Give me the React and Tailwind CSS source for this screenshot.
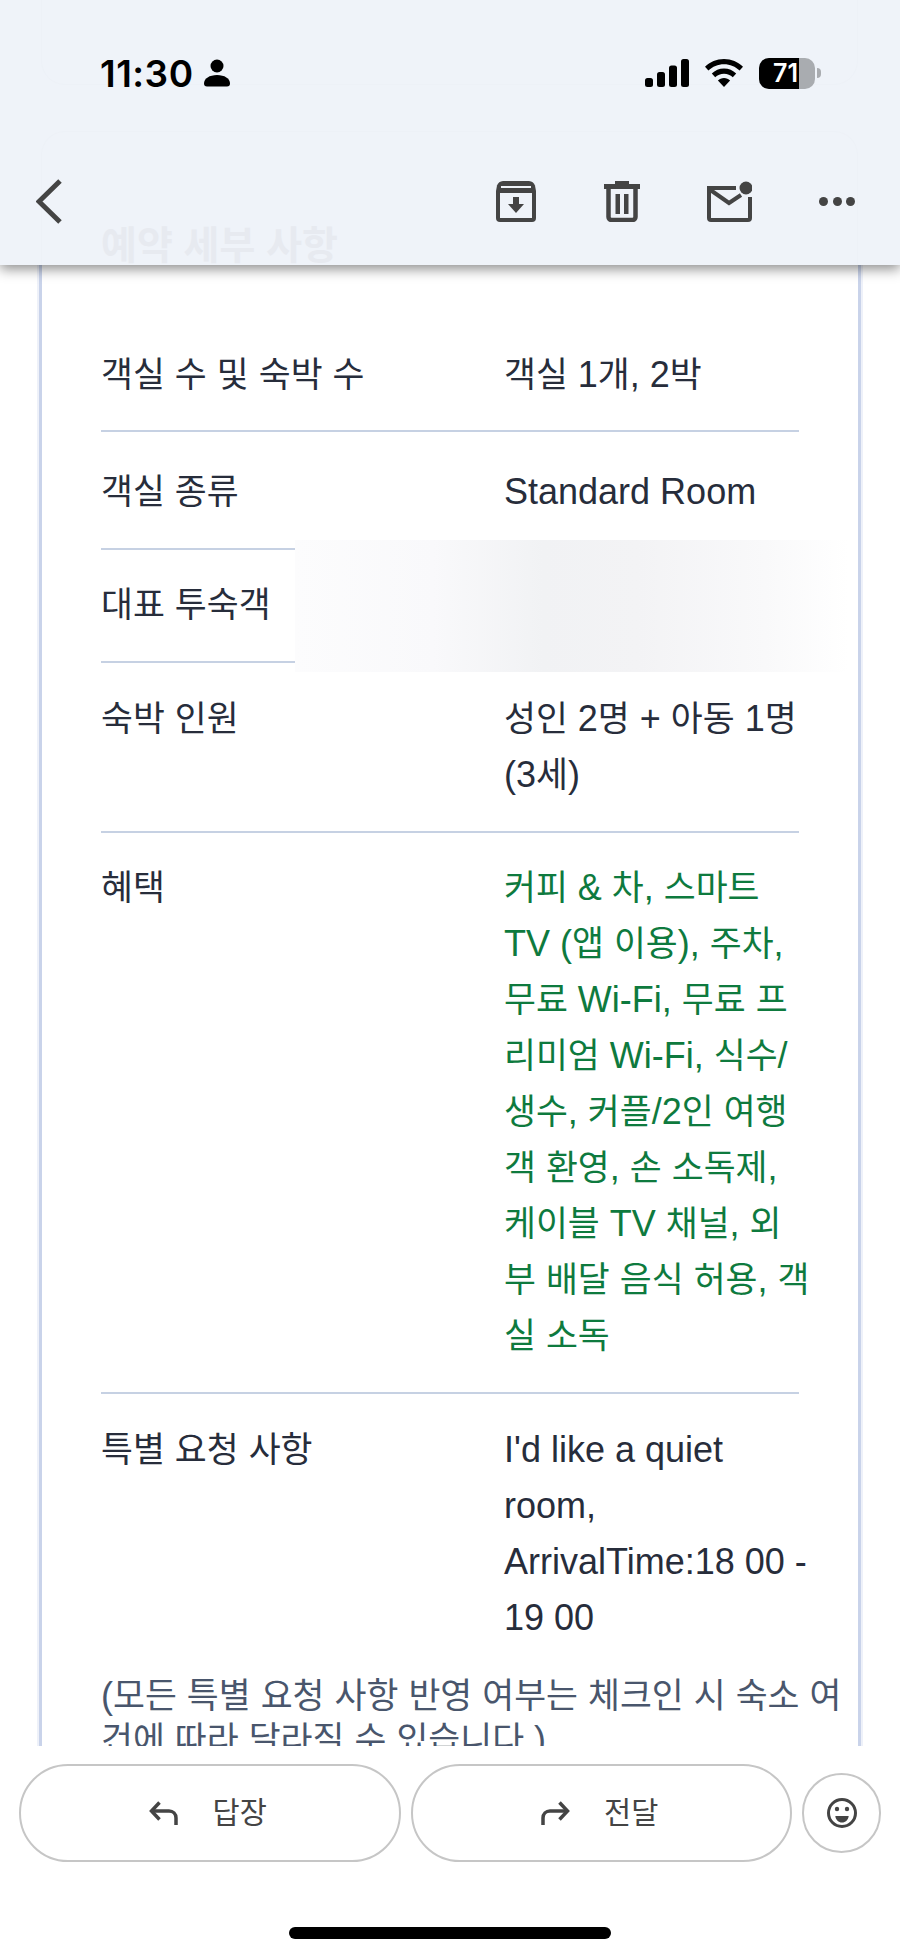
import React from "react";

// hangul is set a bit smaller than latin, like the iOS font pairing
const Txt = ({ children }) => {
  const parts = children.split(/([\uAC00-\uD7A3]+)/);
  return (
    <>
      {parts.map((part, i) =>
        /[\uAC00-\uD7A3]/.test(part) ? (
          <span key={i} className="text-[34.7px] leading-none">
            {part}
          </span>
        ) : (
          <span key={i}>{part}</span>
        )
      )}
    </>
  );
};

const Row = ({ label, lines, green, last, className, children }) => (
  <div
    className={`relative grid grid-cols-[403px_1fr] w-[698px] ${
      last ? "" : "border-b-2 border-[#c6d1e3]"
    } ${className}`}
  >
    <div className="text-[#272d3b] whitespace-nowrap">
      <Txt>{label}</Txt>
    </div>
    <div className={`whitespace-nowrap ${green ? "text-[#0e7a3e]" : "text-[#272d3b]"}`}>
      {lines.map((line) => (
        <div key={line}>
          <Txt>{line}</Txt>
        </div>
      ))}
    </div>
    {children}
  </div>
);

const perks = [
  "커피 & 차, 스마트",
  "TV (앱 이용), 주차,",
  "무료 Wi-Fi, 무료 프",
  "리미엄 Wi-Fi, 식수/",
  "생수, 커플/2인 여행",
  "객 환영, 손 소독제,",
  "케이블 TV 채널, 외",
  "부 배달 음식 허용, 객",
  "실 소독",
];

const StatusIcons = () => (
  <div className="flex items-center">
    <svg width="44" height="28" viewBox="0 0 44 28" fill="#000">
      <rect x="0" y="19" width="8" height="9" rx="2.5" />
      <rect x="12" y="13" width="8" height="15" rx="2.5" />
      <rect x="24" y="6.5" width="8" height="21.5" rx="2.5" />
      <rect x="36" y="0" width="8" height="28" rx="2.5" />
    </svg>
    <svg className="ml-[16px]" width="38" height="28" viewBox="0 0 38 28">
      <path d="M19 0C11.5 0 5 3 0 7.8l3.4 3.8C7.5 7.7 13 5.3 19 5.3s11.5 2.4 15.6 6.3L38 7.8C33 3 26.5 0 19 0z" />
      <path d="M19 9.5c-4.7 0-9 1.9-12.2 5l3.4 3.8c2.3-2.2 5.4-3.6 8.8-3.6s6.5 1.4 8.8 3.6l3.4-3.8c-3.2-3.1-7.5-5-12.2-5z" />
      <path d="M19 19c-2.4 0-4.5.9-6.1 2.4L19 28l6.1-6.6C23.5 19.9 21.4 19 19 19z" />
    </svg>
    <div className="relative ml-[16px] flex h-[31px] w-[56px] overflow-hidden rounded-[10px] bg-[#a9acb0]">
      <div className="flex h-full w-[40px] items-center justify-end bg-black pr-[1px]">
        <span className="font-['Inter',sans-serif] text-[25px] font-semibold leading-none text-white">71</span>
      </div>
    </div>
    <div className="ml-[2px] h-[10px] w-[4px] rounded-r-full bg-[#a9acb0]" />
  </div>
);

const Toolbar = () => (
  <div className="mt-[90px] flex h-[45px] items-center pl-[36px] pr-[45px]">
    <svg width="26" height="45" viewBox="0 0 26 45" fill="none" stroke="#444" strokeWidth="5">
      <path d="M24 2L3 22.5 24 43" strokeLinejoin="miter" />
    </svg>
    <div className="ml-auto flex items-center gap-[68px]">
      <svg width="40" height="41" viewBox="0 0 40 41" fill="none">
        <path
          d="M7 0h26a7 7 0 0 1 6 4.5L40 10v27a4 4 0 0 1-4 4H4a4 4 0 0 1-4-4V10l1-5.5A7 7 0 0 1 7 0z"
          fill="#444"
        />
        <rect x="4" y="12" width="32" height="25" fill="#eff3f9" />
        <rect x="5" y="5" width="30" height="2" fill="#eff3f9" />
        <path d="M17 16h6v7h5L20 32l-8-9h5z" fill="#444" />
      </svg>
      <svg width="36" height="41" viewBox="0 0 36 41" fill="none">
        <path d="M11 0h14v3h11v5H0V3h11z" fill="#444" />
        <path d="M4.500 8v28a3 3 0 0 0 3 3h21a3 3 0 0 0 3-3V8" stroke="#444" strokeWidth="4.500" />
        <rect x="11.500" y="13" width="4.500" height="20" fill="#444" />
        <rect x="20" y="13" width="4.500" height="20" fill="#444" />
      </svg>
      <svg className="-ml-[1px]" width="45" height="41" viewBox="0 0 45 41" fill="none">
        <path
          d="M29 7H2v30a2 2 0 0 0 2 2h37a2 2 0 0 0 2-2V16"
          stroke="#444"
          strokeWidth="4"
        />
        <path d="M2 8l20 14 12-8" stroke="#444" strokeWidth="4" />
        <circle cx="39" cy="7" r="6.500" fill="#444" />
      </svg>
      <div className="-ml-[1px] flex w-[36px] justify-between">
        <span className="h-[9px] w-[9px] rounded-full bg-[#444]" />
        <span className="h-[9px] w-[9px] rounded-full bg-[#444]" />
        <span className="h-[9px] w-[9px] rounded-full bg-[#444]" />
      </div>
    </div>
  </div>
);

const Pill = ({ flip, label }) => (
  <button className="flex h-[98px] flex-1 items-center justify-center rounded-full border-2 border-[#c6c6c6] bg-white pr-[4px]">
    <svg
      className={flip ? "-scale-x-100" : ""}
      width="30"
      height="24"
      viewBox="0 0 30 24"
      fill="none"
      stroke="#444"
      strokeWidth="3.5"
    >
      <path d="M10.500 1.500L2.500 10 10.500 18.500" />
      <path d="M2.500 10H20c4 0 7 3 7 7V24" />
    </svg>
    <span className="ml-[34px] text-[29.5px] text-[#444]">{label}</span>
  </button>
);

const App = () => {
  return (
    <div className="flex h-[1957px] w-[900px] flex-col overflow-hidden bg-white font-['Liberation_Sans','Noto_Sans_CJK_KR',sans-serif] text-[36px] leading-[56px]">
      <header className="relative z-10 h-[265px] shrink-0 bg-[#eff3f9] pt-[57px] shadow-[0_4px_12px_rgba(0,0,0,0.45)]">
        {/* faint card edges showing through the frosted bar */}
        <div className="absolute left-[41px] top-0 h-[85px] w-[817px] rounded-b-[24px] border border-t-0 border-[#edf1f7]" />
        <div className="absolute bottom-0 left-[41px] top-[131px] w-[817px] rounded-t-[24px] border border-b-0 border-[#edf1f7]" />
        <div className="absolute bottom-[-6px] left-[101px] text-[39px] font-bold leading-[50px] text-[#e7eaf0]">
          예약 세부 사항
        </div>

        <div className="relative flex h-[32px] items-center pl-[100px] pr-[79px]">
          <span className="font-['Inter',sans-serif] text-[37px] font-semibold leading-none tracking-[0.5px] text-black">
            11:30
          </span>
          <svg className="ml-[10px]" width="26" height="28" viewBox="0 0 26 28" fill="#000">
            <circle cx="13" cy="7" r="6.500" />
            <path d="M13 16c7.500 0 13 3.500 13 8.500 0 2-1 3-3 3H3c-2 0-3-1-3-3 0-5 5.500-8.500 13-8.500z" />
          </svg>
          <div className="ml-auto">
            <StatusIcons />
          </div>
        </div>
        <div className="relative">
          <Toolbar />
        </div>
      </header>

      <main className="min-h-0 flex-1 overflow-hidden">
        <div className="mx-[39px] h-full border-x-[3px] border-[#c9d3ea] pl-[59px] pt-[82px] shadow-[0_0_0_2px_#eef1f9]">
          <Row label="객실 수 및 숙박 수" lines={["객실 1개, 2박"]} className="pb-[27px]" />
          <Row label="객실 종류" lines={["Standard Room"]} className="pb-[28px] pt-[32px]" />
          <Row label="대표 투숙객" lines={[""]} className="pb-[28px] pt-[27px]">
            <div className="absolute left-[194px] top-[-10px] h-[132px] w-[553px] bg-[linear-gradient(to_right,#fcfcfd,#f9f9fb_25%,#f1f2f4_45%,#f3f3f5_62%,#f9f9fa_85%,#ffffff)]" />
          </Row>
          <Row label="숙박 인원" lines={["성인 2명 + 아동 1명", "(3세)"]} className="pb-[28px] pt-[28px]" />
          <Row label="혜택" lines={perks} green className="pb-[28px] pt-[27px]" />
          <Row
            label="특별 요청 사항"
            lines={["I'd like a quiet", "room,", "ArrivalTime:18 00 -", "19 00"]}
            last
            className="pt-[28px]"
          />
          <div className="mt-[28px] w-[745px] leading-[44px] text-[#49566c]">
            <Txt>(모든 특별 요청 사항 반영 여부는 체크인 시 숙소 여건에 따라 달라질 수 있습니다.)</Txt>
          </div>
        </div>
      </main>

      <footer className="h-[211px] shrink-0 bg-white">
        <div className="flex items-center gap-[10px] px-[19px] pt-[18px]">
          <Pill label="답장" />
          <Pill flip label="전달" />
          <button className="flex h-[80px] w-[79px] shrink-0 items-center justify-center rounded-full border-2 border-[#c6c6c6]">
            <svg width="30" height="30" viewBox="0 0 30 30" fill="none">
              <circle cx="15" cy="15" r="13.500" stroke="#444" strokeWidth="3" />
              <circle cx="10" cy="11" r="2.200" fill="#444" />
              <circle cx="20" cy="11" r="2.200" fill="#444" />
              <path d="M8.300 18h13.400c-.5 4-3.200 6.500-6.700 6.500S8.800 22 8.300 18z" fill="#444" />
            </svg>
          </button>
        </div>
        <div className="mx-auto mt-[65px] h-[12px] w-[322px] rounded-full bg-black" />
      </footer>
    </div>
  );
};

export default App;
